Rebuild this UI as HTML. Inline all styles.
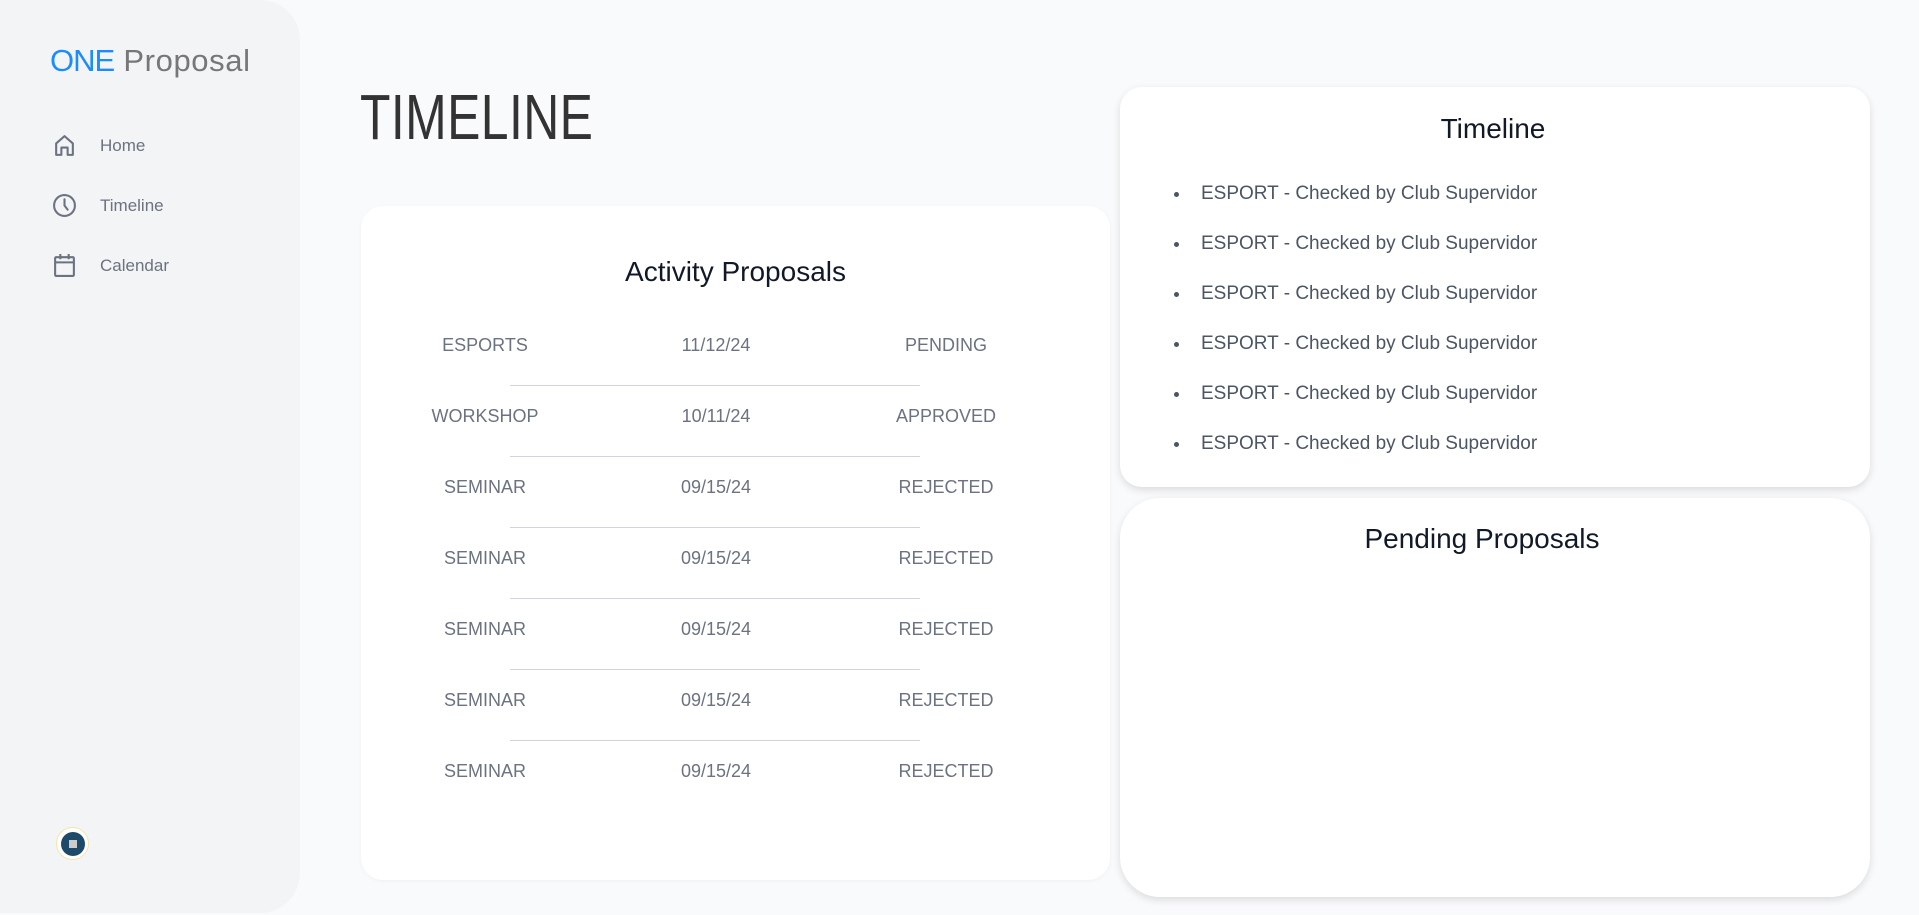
<!DOCTYPE html>
<html><head><meta charset="utf-8"><style>
*{margin:0;padding:0;box-sizing:border-box}
body{width:1919px;height:915px;background:#f9fafb;font-family:"Liberation Sans",sans-serif;position:relative;overflow:hidden}
.side{position:absolute;left:0;top:0;width:300px;height:913px;background:#f3f4f6;border-radius:0 40px 40px 0}
.logo{position:absolute;left:50px;top:43px;font-size:31px;color:#777;letter-spacing:0.6px;font-weight:300}
.logo b{color:#1a8cff;font-weight:400;letter-spacing:-1px}
.nav{position:absolute;left:52px;display:flex;align-items:center;font-size:17px;color:#6b7280}
.nav svg{width:25px;height:25px;margin-right:23px}
.h1{position:absolute;left:360px;top:80px;font-size:64px;font-weight:300;color:#333;letter-spacing:0.5px;transform:scaleX(0.78);transform-origin:left}
.card{position:absolute;background:#fff;border-radius:22px}
.t{position:absolute;text-align:center;font-size:28px;color:#111827;width:100%}
.row{position:absolute;left:0;width:100%;font-size:18px;color:#6b7280}
.row span{position:absolute;transform:translateX(-50%);white-space:nowrap}
.hr{position:absolute;left:149px;width:410px;border-top:1px solid #d1d5db}
.li{position:absolute;left:81px;font-size:19px;color:#4b5563;white-space:nowrap}
.li:before{content:"";position:absolute;left:-27px;top:9px;width:5px;height:5px;border-radius:50%;background:#4b5563}
</style></head><body>
<div class="side">
<div class="logo"><b>ONE</b> Proposal</div>
<div class="nav" style="top:133px"><svg viewBox="0 0 24 24" fill="none" stroke="#6b7280" stroke-width="2" stroke-linejoin="round"><path d="M4 21V10l8-7 8 7v11h-5v-7H9v7z"/></svg>Home</div>
<div class="nav" style="top:193px"><svg viewBox="0 0 24 24" fill="none" stroke="#6b7280" stroke-width="2" stroke-linecap="round"><circle cx="12" cy="12" r="10"/><path d="M12 6v6l3 4"/></svg>Timeline</div>
<div class="nav" style="top:253px"><svg viewBox="0 0 24 24" fill="none" stroke="#6b7280" stroke-width="2"><rect x="3" y="4" width="18" height="18" rx="1"/><path d="M3 9h18M8 1v5M16 1v5"/></svg>Calendar</div>
<div style="position:absolute;left:56px;top:827px;width:33px;height:33px;border-radius:50%;background:#fff;border:1px solid #f3e6a8"><div style="position:absolute;left:4px;top:4px;width:24px;height:24px;border-radius:50%;background:#1e4a6a"><div style="position:absolute;left:8px;top:8px;width:8px;height:8px;background:#ccc"></div></div></div>
</div>
<div class="h1">TIMELINE</div>
<div class="card" style="left:361px;top:206px;width:749px;height:674px;box-shadow:0 1px 4px rgba(0,0,0,0.04)">
<div class="t" style="top:50px">Activity Proposals</div>
<div class="row" style="top:129px"><span style="left:124px">ESPORTS</span><span style="left:355px">11/12/24</span><span style="left:585px">PENDING</span></div>
<div class="hr" style="top:179px"></div>
<div class="row" style="top:200px"><span style="left:124px">WORKSHOP</span><span style="left:355px">10/11/24</span><span style="left:585px">APPROVED</span></div>
<div class="hr" style="top:250px"></div>
<div class="row" style="top:271px"><span style="left:124px">SEMINAR</span><span style="left:355px">09/15/24</span><span style="left:585px">REJECTED</span></div>
<div class="hr" style="top:321px"></div>
<div class="row" style="top:342px"><span style="left:124px">SEMINAR</span><span style="left:355px">09/15/24</span><span style="left:585px">REJECTED</span></div>
<div class="hr" style="top:392px"></div>
<div class="row" style="top:413px"><span style="left:124px">SEMINAR</span><span style="left:355px">09/15/24</span><span style="left:585px">REJECTED</span></div>
<div class="hr" style="top:463px"></div>
<div class="row" style="top:484px"><span style="left:124px">SEMINAR</span><span style="left:355px">09/15/24</span><span style="left:585px">REJECTED</span></div>
<div class="hr" style="top:534px"></div>
<div class="row" style="top:555px"><span style="left:124px">SEMINAR</span><span style="left:355px">09/15/24</span><span style="left:585px">REJECTED</span></div>
</div>
<div class="card" style="left:1120px;top:87px;width:750px;height:400px;box-shadow:0 3px 8px rgba(0,0,0,0.12)">
<div class="t" style="top:26px;left:-2px">Timeline</div>
<div class="li" style="top:96px">ESPORT - Checked by Club Supervidor</div>
<div class="li" style="top:146px">ESPORT - Checked by Club Supervidor</div>
<div class="li" style="top:196px">ESPORT - Checked by Club Supervidor</div>
<div class="li" style="top:246px">ESPORT - Checked by Club Supervidor</div>
<div class="li" style="top:296px">ESPORT - Checked by Club Supervidor</div>
<div class="li" style="top:346px">ESPORT - Checked by Club Supervidor</div>
</div>
<div class="card" style="left:1120px;top:498px;width:750px;height:399px;border-radius:40px;box-shadow:0 3px 8px rgba(0,0,0,0.12)">
<div class="t" style="top:25px;left:-13px">Pending Proposals</div>
</div>
</body></html>
